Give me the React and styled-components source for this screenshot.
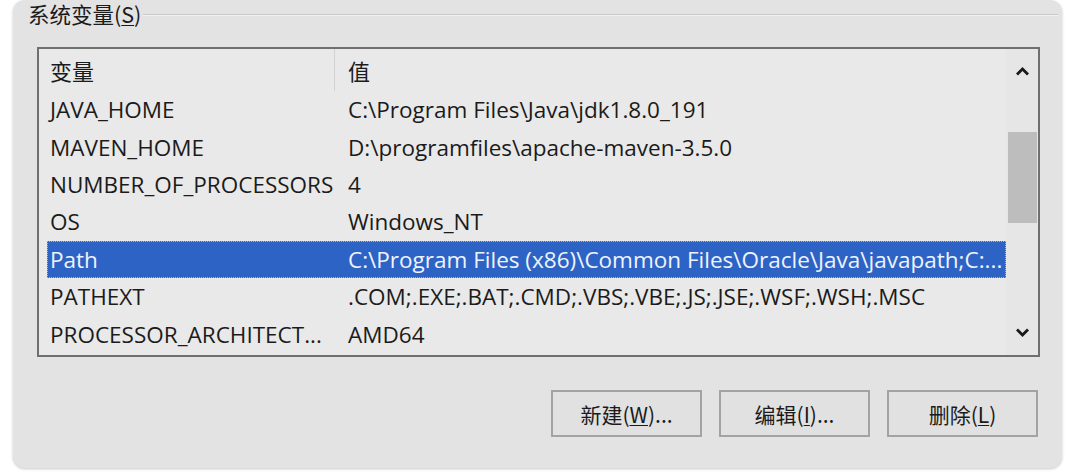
import React from 'react';
import styled, { createGlobalStyle } from 'styled-components';

const GlobalStyle = createGlobalStyle`
  html, body {
    margin: 0;
    padding: 0;
    background: #ffffff;
  }
  body {
    font-family: "Open Sans", "Noto Sans CJK SC", sans-serif;
    color: #1b1b1b;
  }
`;

const Page = styled.div`
  width: 1074px;
  height: 474px;
  padding: 0 12px 6px 13px;
  box-sizing: border-box;
`;

const Card = styled.div`
  height: 100%;
  background: #e3e3e3;
  border-radius: 12px;
  box-shadow: 0 1px 3px rgba(0, 0, 0, 0.22);
  padding: 2px 4px 0 15px;
  box-sizing: border-box;
  display: flex;
  flex-direction: column;
`;

const GroupHeader = styled.div`
  display: flex;
  align-items: center;
  height: 24px;
  gap: 2px;
`;

const GroupLabel = styled.span`
  font-size: 21.5px;
  line-height: 24px;
  white-space: nowrap;
  font-family: "Noto Sans CJK SC", "Open Sans", sans-serif;
`;

const GroupLine = styled.div`
  flex: 1;
  height: 0;
  border-top: 1px solid #c9c9c9;
  border-bottom: 1px solid #f0f0f0;
  margin-top: 2px;
`;

const Mnemonic = styled.span`
  text-decoration: underline;
  text-underline-offset: 2px;
  text-decoration-thickness: 1px;
`;

const ListView = styled.div`
  margin: 21px 0 0 9px;
  width: 1003px;
  height: 310px;
  border: 2px solid #6f6f6f;
  box-sizing: border-box;
  background: #e9e9e9;
  display: flex;
`;

const Table = styled.div`
  flex: 1;
  padding-left: 8px;
  display: flex;
  flex-direction: column;
`;

const HeaderRow = styled.div`
  display: grid;
  grid-template-columns: 288px 1fr;
  height: 42px;
  align-items: center;
`;

const HeaderCell = styled.div`
  font-family: "Noto Sans CJK SC", sans-serif;
  font-size: 22px;
  padding-left: ${({ $pad }) => $pad}px;
  height: 100%;
  display: flex;
  align-items: center;
  border-right: ${({ $divider }) => ($divider ? '1px solid #d2d2d2' : 'none')};
  box-sizing: border-box;
`;

const Row = styled.div`
  display: grid;
  grid-template-columns: 288px 1fr;
  height: 37.4px;
  align-items: center;
  box-sizing: border-box;
  background: ${({ $selected }) => ($selected ? '#2e63c6' : 'transparent')};
  color: ${({ $selected }) => ($selected ? '#eef3fc' : '#1b1b1b')};
  outline: ${({ $selected }) => ($selected ? '1px dotted #9ab6ea' : 'none')};
  outline-offset: -1px;
`;

const Cell = styled.div`
  font-size: 22.5px;
  padding-left: ${({ $pad }) => $pad}px;
  white-space: nowrap;
  overflow: hidden;
`;

const ScrollBar = styled.div`
  width: 32px;
  background: #e6e6e6;
  display: flex;
  flex-direction: column;
  align-items: center;
`;

const ArrowButton = styled.div`
  height: 44px;
  width: 100%;
  display: flex;
  align-items: center;
  justify-content: center;
`;

const Track = styled.div`
  flex: 1;
  width: 100%;
  padding: 39px 1px 0 2px;
  box-sizing: border-box;
`;

const Thumb = styled.div`
  height: 91px;
  background: #bdbdbd;
`;

const ButtonBar = styled.div`
  display: flex;
  justify-content: flex-end;
  gap: 17px;
  margin: 33px 20px 0 0;
`;

const Button = styled.button`
  width: 151px;
  height: 47px;
  border: 2px solid #a3a3a3;
  background: #e1e1e1;
  font-family: "Noto Sans CJK SC", "Open Sans", sans-serif;
  font-size: 21px;
  color: #1b1b1b;
  padding: 0;
  display: flex;
  align-items: center;
  justify-content: center;
`;

const Chevron = ({ up }) => (
  <svg width="15" height="10" viewBox="0 0 15 10">
    <path
      d={up ? 'M2 8.5 L7.5 3 L13 8.5' : 'M2 1.5 L7.5 7 L13 1.5'}
      fill="none"
      stroke="#1a1a1a"
      strokeWidth="2.8"
    />
  </svg>
);

const rows = [
  ['JAVA_HOME', 'C:\\Program Files\\Java\\jdk1.8.0_191'],
  ['MAVEN_HOME', 'D:\\programfiles\\apache-maven-3.5.0'],
  ['NUMBER_OF_PROCESSORS', '4'],
  ['OS', 'Windows_NT'],
  ['Path', 'C:\\Program Files (x86)\\Common Files\\Oracle\\Java\\javapath;C:...'],
  ['PATHEXT', '.COM;.EXE;.BAT;.CMD;.VBS;.VBE;.JS;.JSE;.WSF;.WSH;.MSC'],
  ['PROCESSOR_ARCHITECT...', 'AMD64'],
];

export default function App() {
  return (
    <>
      <GlobalStyle />
      <Page>
        <Card>
          <GroupHeader>
            <GroupLabel>
              系统变量(<Mnemonic>S</Mnemonic>)
            </GroupLabel>
            <GroupLine />
          </GroupHeader>
          <ListView>
            <Table>
              <HeaderRow>
                <HeaderCell $pad={3} $divider>
                  变量
                </HeaderCell>
                <HeaderCell $pad={13}>值</HeaderCell>
              </HeaderRow>
              {rows.map(([name, value]) => (
                <Row key={name} $selected={name === 'Path'}>
                  <Cell $pad={3}>{name}</Cell>
                  <Cell $pad={13}>{value}</Cell>
                </Row>
              ))}
            </Table>
            <ScrollBar>
              <ArrowButton>
                <Chevron up />
              </ArrowButton>
              <Track>
                <Thumb />
              </Track>
              <ArrowButton>
                <Chevron />
              </ArrowButton>
            </ScrollBar>
          </ListView>
          <ButtonBar>
            <Button>
              新建(<Mnemonic>W</Mnemonic>)...
            </Button>
            <Button>
              编辑(<Mnemonic>I</Mnemonic>)...
            </Button>
            <Button>
              删除(<Mnemonic>L</Mnemonic>)
            </Button>
          </ButtonBar>
        </Card>
      </Page>
    </>
  );
}
